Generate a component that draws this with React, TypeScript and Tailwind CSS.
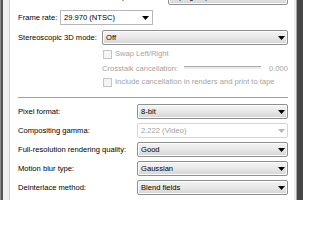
import React from 'react';

const font = { fontFamily: '"Liberation Sans", Arial, sans-serif' };

function Arrow({ disabled }: { disabled?: boolean }) {
  return (
    <svg width="7" height="4" viewBox="0 0 7 4" className="shrink-0">
      <path d="M0 0h7L3.5 4z" fill={disabled ? '#b8b8b8' : '#000'} />
    </svg>
  );
}

function Select({ value, className }: { value: string; className: string }) {
  return (
    <div
      className={`h-[15px] min-w-0 rounded-[2px] border border-[#8e8f8f] bg-linear-to-b from-[#f4f4f4] via-[#e8e8e8] to-[#d4d4d4] flex items-center pl-[3px] pr-[2px] shadow-[inset_0_0_0_1px_#fcfcfc] ${className}`}
    >
      <span className="flex-1 text-black leading-none whitespace-nowrap">{value}</span>
      <Arrow />
    </div>
  );
}

function Check({ label }: { label: string }) {
  return (
    <div className="h-[10px] flex items-center pl-[85px] gap-[3px]">
      <div className="w-[9px] h-[9px] shrink-0 border border-[#c5c5c5] bg-[#f5f5f5]" />
      <span className="text-[#a3a3a3] leading-none whitespace-nowrap">{label}</span>
    </div>
  );
}

function Row({ label, children }: { label: string; children: React.ReactNode }) {
  return (
    <div className="h-[15px] flex items-center">
      <span className="w-[119px] shrink-0 text-black leading-none whitespace-nowrap">{label}</span>
      {children}
    </div>
  );
}

export default function App() {
  return (
    <div className="w-[303px] h-[200px] overflow-hidden flex flex-row bg-[#474747] text-[7.6px]" style={font}>
      <div className="w-[10px] h-[200px] shrink-0 flex flex-row">
        <div className="w-px h-full bg-[#8a8a8a]" />
        <div className="w-[2px] h-full bg-[#555555]" />
        <div className="w-[6px] h-full bg-[#f0f0f0]" />
        <div className="w-px h-full bg-[#cfcfcf]" />
      </div>

      <div className="w-[284px] h-[200px] shrink-0 overflow-hidden bg-white pl-[8px] pr-[6px] flex flex-col">
        <div className="h-[14px] mt-[-10px] flex items-center justify-end gap-[6px]">
          <span className="text-black leading-none whitespace-nowrap">Output rotation:</span>
          <Select value="0 (original)" className="w-[120px] shrink-0" />
        </div>

        <div className="h-[15px] mt-[6px] flex items-center">
          <span className="w-[42px] shrink-0 text-black leading-none whitespace-nowrap">Frame rate:</span>
          <div className="w-[93px] h-[15px] shrink-0 border border-[#b5b7bc] bg-white flex items-center pl-[3px] pr-[3px]">
            <span className="flex-1 text-black leading-none whitespace-nowrap">29.970 (NTSC)</span>
            <Arrow />
          </div>
        </div>

        <div className="h-[15px] mt-[5px] flex items-center">
          <span className="w-[84px] shrink-0 text-black leading-none whitespace-nowrap">Stereoscopic 3D mode:</span>
          <Select value="Off" className="flex-1" />
        </div>

        <div className="mt-[4px]">
          <Check label="Swap Left/Right" />
        </div>

        <div className="h-[10px] mt-[5px] flex items-center pl-[84px] text-[#a3a3a3]">
          <span className="w-[82px] shrink-0 leading-none whitespace-nowrap">Crosstalk cancellation:</span>
          <div className="w-[77px] h-[3px] shrink-0 border-t border-[#a8a8a8] bg-[#ececec] mb-[3px]" />
          <span className="flex-1 text-right leading-none">0.000</span>
        </div>

        <div className="mt-[3px]">
          <Check label="Include cancellation in renders and print to tape" />
        </div>

        <div className="h-px mt-[10px] bg-[#a0a0a0]" />

        <div className="mt-[6px] flex flex-col gap-[4px]">
          <Row label="Pixel format:">
            <Select value="8-bit" className="flex-1" />
          </Row>
          <Row label="Compositing gamma:">
            <div className="flex-1 h-[15px] rounded-[2px] border border-[#d5d5d5] bg-white flex items-center pl-[3px] pr-[2px]">
              <span className="flex-1 text-[#a3a3a3] leading-none">2.222 (Video)</span>
              <Arrow disabled />
            </div>
          </Row>
          <Row label="Full-resolution rendering quality:">
            <Select value="Good" className="flex-1" />
          </Row>
          <Row label="Motion blur type:">
            <Select value="Gaussian" className="flex-1" />
          </Row>
          <Row label="Deinterlace method:">
            <Select value="Blend fields" className="flex-1" />
          </Row>
        </div>
      </div>

      <div className="w-[9px] h-[200px] shrink-0 flex flex-row">
        <div className="w-[2px] h-full bg-[#ececec]" />
        <div className="w-px h-full bg-[#a5a5a5]" />
        <div className="w-[6px] h-full bg-[#474747]" />
      </div>
    </div>
  );
}
